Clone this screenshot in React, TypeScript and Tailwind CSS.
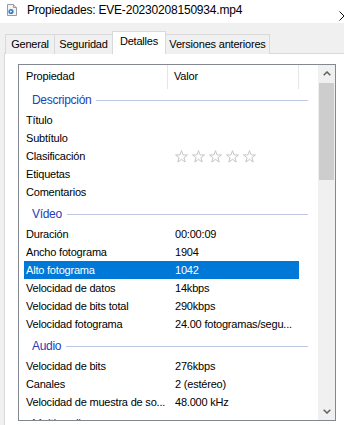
import React from 'react';

type Row = { label: string; value?: string; stars?: boolean; selected?: boolean };
type Group = { name: string; rows: Row[] };

const groups: Group[] = [
  {
    name: 'Descripción',
    rows: [
      { label: 'Título' },
      { label: 'Subtítulo' },
      { label: 'Clasificación', stars: true },
      { label: 'Etiquetas' },
      { label: 'Comentarios' },
    ],
  },
  {
    name: 'Vídeo',
    rows: [
      { label: 'Duración', value: '00:00:09' },
      { label: 'Ancho fotograma', value: '1904' },
      { label: 'Alto fotograma', value: '1042', selected: true },
      { label: 'Velocidad de datos', value: '14kbps' },
      { label: 'Velocidad de bits total', value: '290kbps' },
      { label: 'Velocidad fotograma', value: '24.00 fotogramas/segu...' },
    ],
  },
  {
    name: 'Audio',
    rows: [
      { label: 'Velocidad de bits', value: '276kbps' },
      { label: 'Canales', value: '2 (estéreo)' },
      { label: 'Velocidad de muestra de so...', value: '48.000 kHz' },
    ],
  },
  {
    name: 'Multimedia',
    rows: [{ label: 'Colaboradores' }, { label: 'Año' }],
  },
];

const Star = () => (
  <svg width="13" height="13" viewBox="0 0 13 13" className="shrink-0">
    <polygon
      points="6.5,0.6 8,4.84 12.49,4.95 8.93,7.69 10.2,12 6.5,9.45 2.8,12 4.07,7.69 0.51,4.95 5,4.84"
      fill="none"
      stroke="#c6c6c6"
      strokeWidth="1"
      strokeLinejoin="round"
    />
  </svg>
);

const FileIcon = () => (
  <svg width="10" height="12" viewBox="0 0 10 12">
    <path d="M0.5 0.5h6l3 3v8h-9z" fill="#f4f4f4" stroke="#9a9a9a" />
    <path d="M6.5 0.5v3h3" fill="#dcdcdc" stroke="#9a9a9a" />
    <circle cx="4" cy="7.5" r="2.6" fill="#2f7fd0" />
    <path d="M3.2 6.3l2 1.2-2 1.2z" fill="#ffffff" />
  </svg>
);

const Tab = ({ label, width, selected, first }: { label: string; width: string; selected?: boolean; first?: boolean }) =>
  selected ? (
    <div
      className={`relative ${width} -ml-px h-[23px] bg-white border-t border-l border-r border-[#d9d9d9] flex items-center justify-center pb-[3px]`}
    >
      {label}
    </div>
  ) : (
    <div
      className={`${width} ${first ? '' : '-ml-px'} h-[20px] bg-[#f0f0f0] border-t border-l border-r border-[#d9d9d9] flex items-center justify-center pb-[1px]`}
    >
      {label}
    </div>
  );

export default function App() {
  return (
    <div className="w-[344px] h-[425px] overflow-hidden bg-[#f0f0f0] font-['Liberation_Sans',Arial,sans-serif] text-[11px] tracking-[-0.2px] text-black">
      {/* title bar */}
      <div className="h-[23px] bg-white flex items-start">
        <div className="ml-[7px] mt-[4px]">
          <FileIcon />
        </div>
        <div className="ml-[10px] mt-[2px] text-[12px] leading-[16px] tracking-[-0.2px] whitespace-nowrap">
          Propiedades: EVE-20230208150934.mp4
        </div>
        <svg width="10" height="10" viewBox="0 0 10 10" className="ml-auto mt-[11px] -mr-[5px] shrink-0">
          <path d="M0.5 0.5l9 9M9.5 0.5l-9 9" stroke="#111" strokeWidth="1" />
        </svg>
      </div>

      {/* tabs */}
      <div className="h-[31px] pt-[8px] pl-[5px] flex items-end">
        <Tab label="General" width="w-[50px]" first />
        <Tab label="Seguridad" width="w-[59px]" />
        <Tab label="Detalles" width="w-[54px]" selected />
        <Tab label="Versiones anteriores" width="w-[105px]" />
      </div>

      {/* tab page */}
      <div className="-mt-px ml-[4px] h-[400px] bg-white border-t border-l border-[#d9d9d9] pl-[13px] pt-[10px]">
        <div className="w-[318px] h-[357px] border border-[#828790] flex overflow-hidden">
          <div className="flex-1 overflow-hidden">
            {/* header */}
            <div className="h-[24px] flex items-stretch">
              <div className="w-[148px] pl-[7px] pb-[1px] flex items-center">Propiedad</div>
              <div className="w-px bg-[#e5e5e5]" />
              <div className="w-[130px] pl-[6px] pb-[1px] flex items-center">Valor</div>
              <div className="w-px bg-[#e5e5e5]" />
            </div>

            {groups.map((g, gi) => (
              <div key={g.name}>
                <div className={`h-[22px] ${gi === 0 ? '' : 'mt-[2px]'} flex items-center pl-[13px] pr-[10px]`}>
                  <span className="text-[#2340b8] text-[12px] tracking-[-0.3px]">{g.name}</span>
                  <div className="flex-1 h-px bg-[#bcc7e2] ml-[5px]" />
                </div>
                {g.rows.map((r) => (
                  <div
                    key={r.label}
                    className={`ml-[5px] w-[275px] h-[18px] flex items-center whitespace-nowrap ${
                      r.selected ? 'bg-[#0078d7] text-white' : ''
                    }`}
                  >
                    <div className="w-[143px] pl-[2px]">{r.label}</div>
                    <div className="pl-[8px] flex items-center gap-[4px]">
                      {r.stars ? (
                        <>
                          <Star />
                          <Star />
                          <Star />
                          <Star />
                          <Star />
                        </>
                      ) : (
                        r.value
                      )}
                    </div>
                  </div>
                ))}
              </div>
            ))}
          </div>

          {/* scrollbar */}
          <div className="w-[17px] bg-[#f0f0f0] flex flex-col">
            <div className="h-[17px] flex items-center justify-center">
              <svg width="8" height="5" viewBox="0 0 8 5">
                <path d="M0.7 4.3L4 1l3.3 3.3" fill="none" stroke="#606060" strokeWidth="1.5" />
              </svg>
            </div>
            <div className="mt-px mx-px h-[97px] bg-[#cdcdcd]" />
            <div className="flex-1" />
            <div className="h-[17px] flex items-center justify-center">
              <svg width="8" height="5" viewBox="0 0 8 5">
                <path d="M0.7 0.7L4 4l3.3-3.3" fill="none" stroke="#606060" strokeWidth="1.5" />
              </svg>
            </div>
          </div>
        </div>
      </div>
    </div>
  );
}
